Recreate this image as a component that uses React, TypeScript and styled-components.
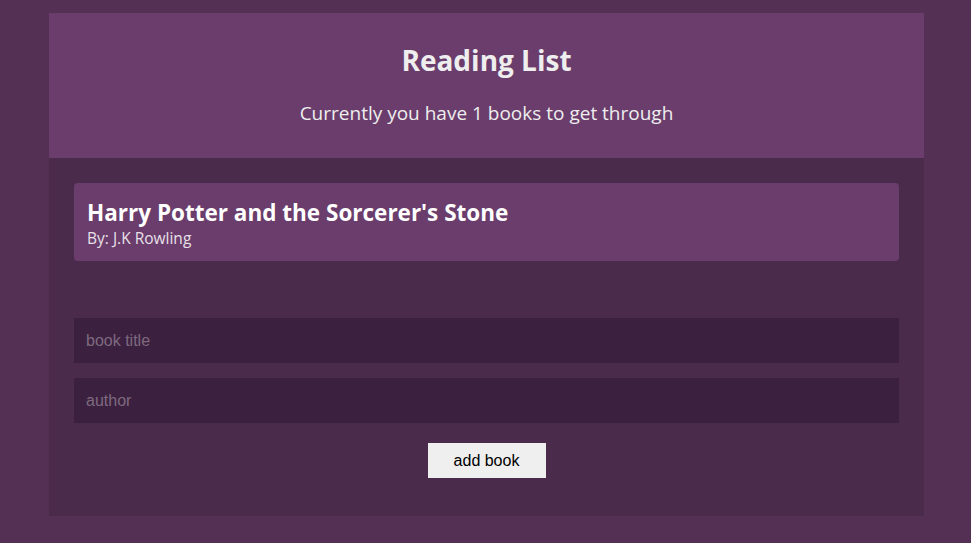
import React, { useState } from "react";
import styled, { createGlobalStyle } from "styled-components";

const GlobalStyle = createGlobalStyle`
  body {
    margin: 0;
    background-color: #553055;
    font-family: "Open Sans", "Noto Sans", sans-serif;
  }
`;

const Page = styled.div`
  padding: 13px 0 27px 2px;
`;

const Main = styled.div`
  width: 875px;
  margin: 0 auto;
  background-color: #4a2b4c;
`;

const Header = styled.div`
  background-color: #6a3d6c;
  color: #eeeeee;
  text-align: center;
  padding: 28px 20px 28px;
`;

const Title = styled.h1`
  margin: 0;
  font-size: 28px;
  font-weight: 700;
  line-height: 38px;
`;

const Subtitle = styled.p`
  margin: 17px 0 0;
  font-size: 19px;
  line-height: 34px;
`;

const Body = styled.div`
  padding: 25px 25px 38px;
  display: flex;
  flex-direction: column;
`;

const BookList = styled.ul`
  list-style: none;
  margin: 0 0 57px;
  padding: 0;
`;

const BookItem = styled.li`
  background-color: #6a3d6c;
  border-radius: 4px;
  padding: 16px 13px 12px;
  color: #ffffff;
`;

const BookTitle = styled.div`
  font-size: 22.5px;
  font-weight: 700;
  line-height: 28px;
`;

const BookAuthor = styled.div`
  font-size: 15.5px;
  line-height: 22px;
  color: #e8e0e8;
`;

const Form = styled.form`
  display: flex;
  flex-direction: column;
  gap: 15px;
`;

const Input = styled.input`
  box-sizing: border-box;
  width: 100%;
  height: 45px;
  border: none;
  outline: none;
  background-color: #3c203f;
  color: #eeeeee;
  padding: 0 12px;
  font-family: "Liberation Sans", Arial, sans-serif;
  font-size: 16px;

  &::placeholder {
    color: #7d6a7f;
  }
`;

const Submit = styled.button`
  align-self: center;
  margin-top: 5px;
  width: 118px;
  height: 35px;
  border: none;
  background-color: #efefef;
  color: #000000;
  font-family: "Liberation Sans", Arial, sans-serif;
  font-size: 16px;
  cursor: pointer;
`;

const books = [{ id: 1, title: "Harry Potter and the Sorcerer's Stone", author: "J.K Rowling" }];

function App() {
  const [title, setTitle] = useState("");
  const [author, setAuthor] = useState("");

  return (
    <Page>
      <GlobalStyle />
      <Main>
        <Header>
          <Title>Reading List</Title>
          <Subtitle>Currently you have {books.length} books to get through</Subtitle>
        </Header>
        <Body>
          <BookList>
            {books.map((book) => (
              <BookItem key={book.id}>
                <BookTitle>{book.title}</BookTitle>
                <BookAuthor>By: {book.author}</BookAuthor>
              </BookItem>
            ))}
          </BookList>
          <Form onSubmit={(e) => e.preventDefault()}>
            <Input placeholder="book title" value={title} onChange={(e) => setTitle(e.target.value)} />
            <Input placeholder="author" value={author} onChange={(e) => setAuthor(e.target.value)} />
            <Submit type="submit">add book</Submit>
          </Form>
        </Body>
      </Main>
    </Page>
  );
}

export default App;
